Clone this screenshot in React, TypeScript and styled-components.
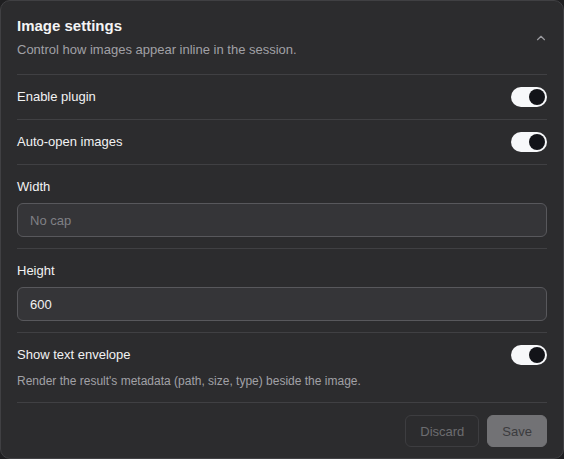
import React, { useState } from 'react';
import styled, { createGlobalStyle } from 'styled-components';
import { ChevronUp } from 'lucide-react';

const GlobalStyle = createGlobalStyle`
  html, body {
    margin: 0;
    padding: 0;
    background: #1f1f21;
  }
  body {
    font-family: "Liberation Sans", Arial, sans-serif;
  }
  * {
    box-sizing: border-box;
  }
`;

const Card = styled.div`
  width: 564px;
  height: 459px;
  background: #2c2c2e;
  border: 1px solid #404043;
  border-radius: 10px;
  padding: 0 16px;
  display: flex;
  flex-direction: column;
  color: #f2f2f3;
`;

const Header = styled.div`
  display: flex;
  align-items: center;
  justify-content: space-between;
  padding: 15px 0 14px;
  border-bottom: 1px solid #404043;
`;

const Title = styled.h2`
  margin: 0;
  font-size: 15px;
  line-height: 20px;
  font-weight: 700;
  color: #f4f4f5;
`;

const Subtitle = styled.p`
  margin: 4px 0 0;
  font-size: 13px;
  line-height: 20px;
  color: #a1a1a6;
`;

const Collapse = styled.button`
  background: none;
  border: none;
  padding: 0;
  margin-right: -1px;
  color: #9a9a9f;
  display: flex;
  cursor: pointer;
`;

const Row = styled.div`
  display: flex;
  flex-direction: column;
  padding: 11px 0 12px;
  border-bottom: 1px solid #404043;
`;

const FieldRow = styled(Row)`
  padding: 12px 0 11px;
`;

const Line = styled.div`
  display: flex;
  align-items: center;
  justify-content: space-between;
  min-height: 21px;
`;

const Label = styled.label`
  font-size: 13px;
  line-height: 20px;
  color: #f2f2f3;
`;

const Hint = styled.p`
  margin: 7px 0 0;
  font-size: 12px;
  line-height: 18px;
  color: #a1a1a6;
`;

const Track = styled.button<{ $on: boolean }>`
  width: 36px;
  height: 20px;
  border-radius: 10px;
  border: none;
  padding: 2px;
  background: ${(p) => (p.$on ? '#f7f8fa' : '#4a4a4e')};
  display: flex;
  justify-content: ${(p) => (p.$on ? 'flex-end' : 'flex-start')};
  cursor: pointer;
`;

const Knob = styled.span`
  width: 16px;
  height: 16px;
  border-radius: 50%;
  background: #121318;
`;

const Input = styled.input`
  margin-top: 6px;
  width: 100%;
  height: 34px;
  border-radius: 6px;
  border: 1px solid #58585c;
  background: #353538;
  color: #f2f2f3;
  padding: 0 12px;
  font-family: inherit;
  font-size: 13px;
  outline: none;
  &::placeholder {
    color: #808085;
  }
`;

const Footer = styled.div`
  display: flex;
  justify-content: flex-end;
  gap: 8px;
  padding-top: 12px;
`;

const Button = styled.button<{ $primary?: boolean }>`
  height: 32px;
  padding: 0 14px;
  border-radius: 6px;
  font-family: inherit;
  font-size: 13px;
  border: 1px solid ${(p) => (p.$primary ? '#727275' : '#3d3d40')};
  background: ${(p) => (p.$primary ? '#727275' : 'transparent')};
  color: ${(p) => (p.$primary ? '#3b3b3e' : '#6c6c70')};
  cursor: not-allowed;
`;

const Toggle: React.FC<{ on: boolean; onChange: () => void }> = ({ on, onChange }) => (
  <Track $on={on} onClick={onChange} aria-pressed={on}>
    <Knob />
  </Track>
);

const App: React.FC = () => {
  const [enabled, setEnabled] = useState(true);
  const [autoOpen, setAutoOpen] = useState(true);
  const [envelope, setEnvelope] = useState(true);
  const [width, setWidth] = useState('');
  const [height, setHeight] = useState('600');

  return (
    <>
      <GlobalStyle />
      <Card>
        <Header>
          <div>
            <Title>Image settings</Title>
            <Subtitle>Control how images appear inline in the session.</Subtitle>
          </div>
          <Collapse aria-label="Collapse">
            <ChevronUp size={14} strokeWidth={2} />
          </Collapse>
        </Header>
        <Row>
          <Line>
            <Label>Enable plugin</Label>
            <Toggle on={enabled} onChange={() => setEnabled(!enabled)} />
          </Line>
        </Row>
        <Row>
          <Line>
            <Label>Auto-open images</Label>
            <Toggle on={autoOpen} onChange={() => setAutoOpen(!autoOpen)} />
          </Line>
        </Row>
        <FieldRow>
          <Label>Width</Label>
          <Input placeholder="No cap" value={width} onChange={(e) => setWidth(e.target.value)} />
        </FieldRow>
        <FieldRow>
          <Label>Height</Label>
          <Input value={height} onChange={(e) => setHeight(e.target.value)} />
        </FieldRow>
        <Row>
          <Line>
            <Label>Show text envelope</Label>
            <Toggle on={envelope} onChange={() => setEnvelope(!envelope)} />
          </Line>
          <Hint>Render the result's metadata (path, size, type) beside the image.</Hint>
        </Row>
        <Footer>
          <Button disabled>Discard</Button>
          <Button $primary disabled>
            Save
          </Button>
        </Footer>
      </Card>
    </>
  );
};

export default App;
